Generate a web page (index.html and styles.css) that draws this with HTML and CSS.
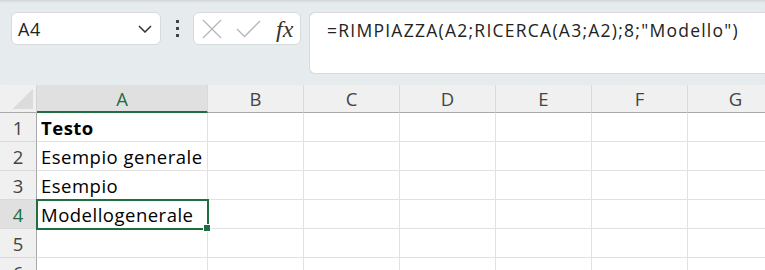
FILE: index.html
```html
<!DOCTYPE html>
<html lang="it">
<head>
  <meta charset="UTF-8">
  <title>Foglio1</title>
  <link rel="stylesheet" href="styles.css">
</head>
<body>
  <!-- Formula bar -->
  <div class="toolbar">
    <div class="namebox">
      <span>A4</span>
      <svg class="chevron" width="14" height="8" viewBox="0 0 14 8"><path d="M1 1l6 6 6-6" fill="none" stroke="#333" stroke-width="1.5"/></svg>
    </div>
    <div class="dots"><i></i><i></i><i></i></div>
    <div class="fnbox">
      <svg width="20" height="20" viewBox="0 0 20 20"><path d="M1 1l18 18M19 1L1 19" fill="none" stroke="#b3b6b9" stroke-width="1.3"/></svg>
      <svg width="25" height="18" viewBox="0 0 25 18"><path d="M1 9l7.5 7.5L24 1" fill="none" stroke="#b3b6b9" stroke-width="1.3"/></svg>
      <span class="fx">fx</span>
    </div>
    <div class="formula">=RIMPIAZZA(A2;RICERCA(A3;A2);8;"Modello")</div>
  </div>

  <!-- Sheet -->
  <div class="sheet">
    <div class="corner"></div>
    <div class="colhead active">A</div>
    <div class="colhead">B</div>
    <div class="colhead">C</div>
    <div class="colhead">D</div>
    <div class="colhead">E</div>
    <div class="colhead">F</div>
    <div class="colhead">G</div>

    <div class="rowhead">1</div>
    <div class="cell bold">Testo</div>
    <div class="cell"></div><div class="cell"></div><div class="cell"></div><div class="cell"></div><div class="cell"></div><div class="cell"></div>

    <div class="rowhead">2</div>
    <div class="cell">Esempio generale</div>
    <div class="cell"></div><div class="cell"></div><div class="cell"></div><div class="cell"></div><div class="cell"></div><div class="cell"></div>

    <div class="rowhead">3</div>
    <div class="cell">Esempio</div>
    <div class="cell"></div><div class="cell"></div><div class="cell"></div><div class="cell"></div><div class="cell"></div><div class="cell"></div>

    <div class="rowhead active">4</div>
    <div class="cell selected">Modellogenerale<span class="handle"></span></div>
    <div class="cell"></div><div class="cell"></div><div class="cell"></div><div class="cell"></div><div class="cell"></div><div class="cell"></div>

    <div class="rowhead">5</div>
    <div class="cell"></div>
    <div class="cell"></div><div class="cell"></div><div class="cell"></div><div class="cell"></div><div class="cell"></div><div class="cell"></div>

    <div class="rowhead">6</div>
    <div class="cell"></div>
    <div class="cell"></div><div class="cell"></div><div class="cell"></div><div class="cell"></div><div class="cell"></div><div class="cell"></div>
  </div>
</body>
</html>
```

FILE: styles.css
```css
body {
  margin: 0;
  width: 765px;
  height: 270px;
  overflow: hidden;
  background: #fff;
  font-family: "Open Sans", sans-serif;
}

.toolbar {
  display: flex;
  align-items: flex-start;
  height: 85px;
  padding: 12px 0 0 11px;
  box-sizing: border-box;
  background: #e6ebee;
  box-shadow: inset 0 3px 3px -2px rgba(0, 0, 0, 0.12);
}

.namebox {
  display: flex;
  align-items: center;
  justify-content: space-between;
  width: 150px;
  height: 33px;
  padding: 0 8px 0 6px;
  box-sizing: border-box;
  background: #fff;
  border: 1px solid #d6dadd;
  border-radius: 6px;
  font-size: 18px;
  letter-spacing: 0.5px;
  color: #222;
}

.dots {
  display: flex;
  flex-direction: column;
  align-items: center;
  gap: 4px;
  width: 32px;
  padding-top: 8px;
}

.dots i {
  width: 3px;
  height: 3px;
  background: #444;
}

.fnbox {
  display: flex;
  align-items: center;
  gap: 14px;
  width: 108px;
  height: 33px;
  padding-left: 8px;
  box-sizing: border-box;
  background: #fff;
  border: 1px solid #d6dadd;
  border-radius: 6px;
}

.fx {
  font-family: "Liberation Serif", serif;
  font-style: italic;
  font-size: 24px;
  color: #333;
  line-height: 1;
  margin-left: 1px;
}

.formula {
  flex: 1;
  height: 62px;
  margin-left: 8px;
  padding: 5px 0 0 17px;
  box-sizing: border-box;
  background: #fff;
  border: 1px solid #d6dadd;
  border-right: none;
  border-radius: 6px 0 0 6px;
  font-size: 17.5px;
  letter-spacing: 1.25px;
  color: #222;
  white-space: nowrap;
}

.sheet {
  display: grid;
  grid-template-columns: 37px 171px 96px 96px 96px 96px 96px 96px;
  grid-template-rows: 28px repeat(6, 29px);
}

.corner {
  position: relative;
  background: #f0f0f0;
  border-right: 1px solid #d4d4d4;
  border-bottom: 1px solid #a9a9a9;
}

.corner::after {
  content: "";
  position: absolute;
  right: 3px;
  bottom: 3px;
  width: 20px;
  height: 20px;
  background: linear-gradient(to bottom right, transparent 50%, #dcdcdc 50%);
}

.colhead {
  display: flex;
  justify-content: center;
  align-items: center;
  background: #f0f0f0;
  border-right: 1px solid #d9d9d9;
  border-bottom: 1px solid #a9a9a9;
  font-size: 18.5px;
  color: #444;
}

.colhead.active {
  background: #e0e0e0;
  border-bottom: 2px solid #1e6e42;
  color: #1e6e42;
}

.rowhead {
  display: flex;
  justify-content: center;
  align-items: center;
  background: #f0f0f0;
  border-right: 1px solid #a9a9a9;
  border-bottom: 1px solid #d9d9d9;
  font-size: 18.5px;
  color: #444;
}

.rowhead.active {
  background: #e0e0e0;
  color: #1e6e42;
}

.cell {
  display: flex;
  align-items: center;
  padding-left: 4px;
  border-right: 1px solid #e1e1e1;
  border-bottom: 1px solid #e1e1e1;
  font-size: 18.5px;
  letter-spacing: 0.5px;
  color: #000;
  white-space: nowrap;
}

.bold {
  font-weight: bold;
}

.selected {
  position: relative;
  outline: 2px solid #1e6e42;
  outline-offset: -1px;
}

.handle {
  position: absolute;
  right: -4px;
  bottom: -4px;
  width: 6px;
  height: 6px;
  background: #1e6e42;
  border: 1px solid #fff;
}
```
